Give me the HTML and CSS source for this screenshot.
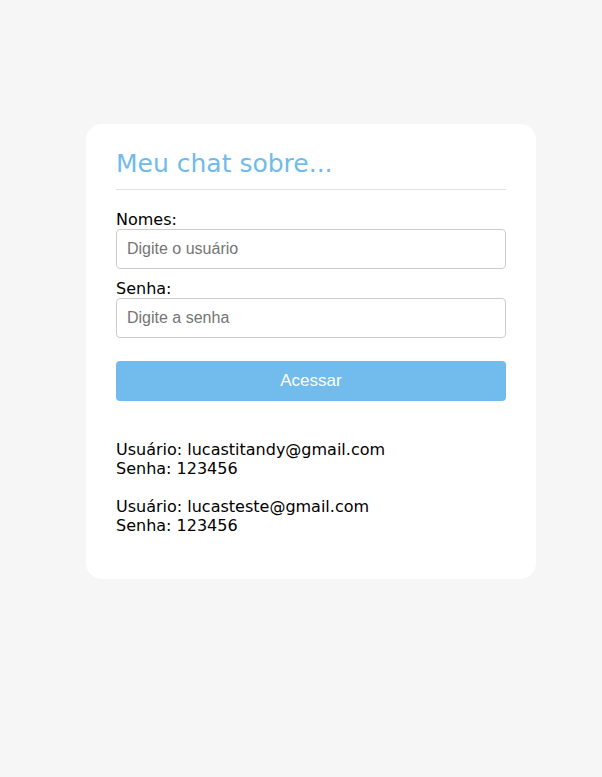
FILE: index.html
```html
<!DOCTYPE html>
<html lang="pt-BR">
<head>
<meta charset="utf-8">
<title>Meu chat sobre...</title>
<link rel="stylesheet" href="styles.css">
</head>
<body>
<div class="page">
  <div class="card">
    <h1 class="title">Meu chat sobre...</h1>
    <hr class="divider">
    <form class="form">
      <label class="label" for="user">Nomes:</label>
      <input class="input" id="user" type="text" placeholder="Digite o usuário">
      <label class="label label-second" for="pass">Senha:</label>
      <input class="input" id="pass" type="password" placeholder="Digite a senha">
      <button class="button" type="button">Acessar</button>
    </form>
    <p class="info">Usuário: lucastitandy@gmail.com<br>Senha: 123456<br><br>Usuário: lucasteste@gmail.com<br>Senha: 123456</p>
  </div>
</div>
</body>
</html>
```
FILE: styles.css
```css
html, body {
  margin: 0;
  padding: 0;
}
body {
  background: #f6f6f6;
  font-family: "DejaVu Sans", Verdana, sans-serif;
  color: #000;
}
.page {
  display: flex;
  justify-content: center;
  padding-top: 124px;
  padding-left: 20px;
}
.card {
  width: 450px;
  box-sizing: border-box;
  background: #fff;
  border-radius: 16px;
  padding: 22px 30px 44px;
}
.title {
  margin: 0;
  font-size: 25px;
  font-weight: normal;
  color: #6fbbec;
  line-height: 36px;
}
.divider {
  border: 0;
  border-top: 1px solid #e3e3e3;
  margin: 7px 0 20px;
}
.form {
  display: flex;
  flex-direction: column;
}
.label {
  font-size: 16px;
  line-height: 19px;
}
.label-second {
  margin-top: 10px;
}
.input {
  height: 40px;
  box-sizing: border-box;
  border: 1px solid #cccccc;
  border-radius: 4px;
  padding: 0 10px;
  font-family: "Liberation Sans", Arial, sans-serif;
  font-size: 16px;
  color: #333;
  outline: none;
}
.input::placeholder {
  color: #757575;
}
.button {
  margin-top: 23px;
  height: 40px;
  border: 0;
  border-radius: 4px;
  background: #71bced;
  color: #fff;
  font-family: "Liberation Sans", Arial, sans-serif;
  font-size: 17px;
}
.info {
  margin: 39px 0 0;
  font-size: 16px;
  line-height: 19px;
}
```
